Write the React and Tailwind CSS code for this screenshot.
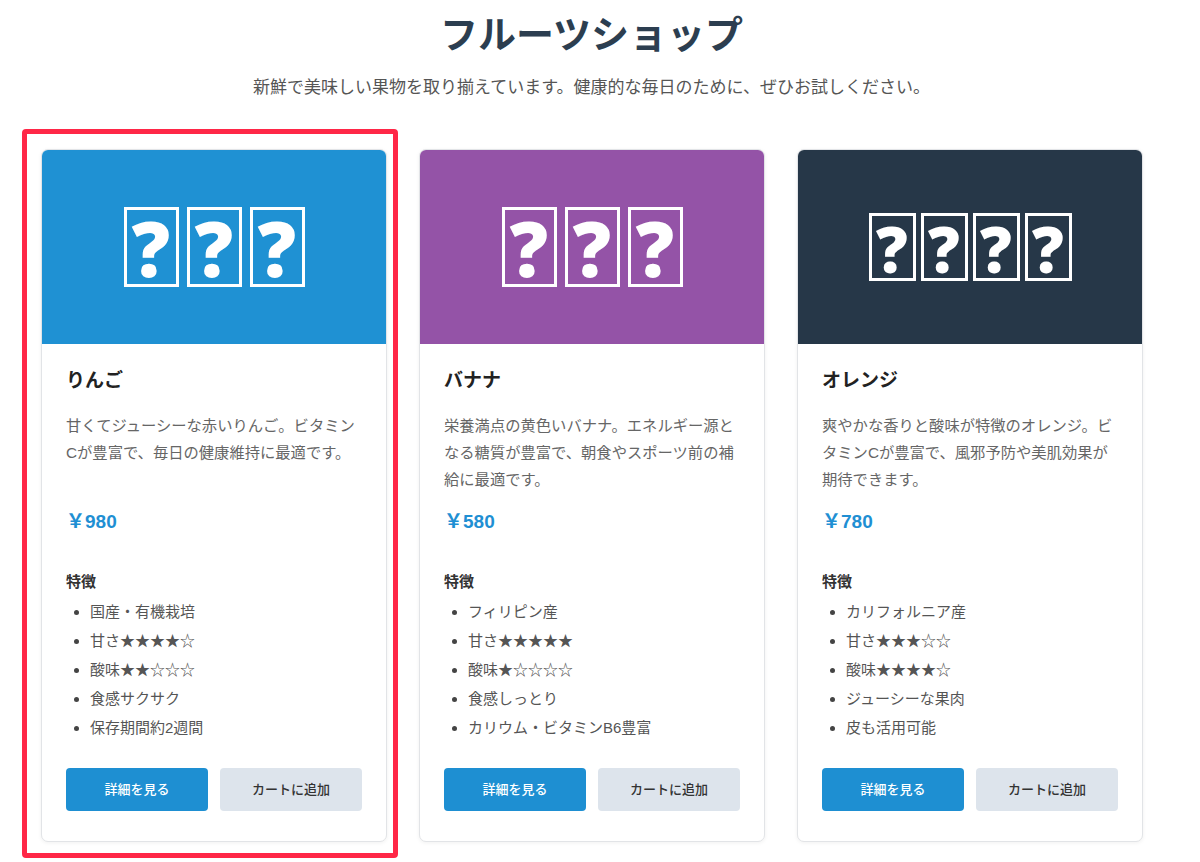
import React from "react";

const products = [
  {
    name: "りんご",
    color: "bg-[#1f91d3]",
    boxes: 3,
    big: true,
    desc: "甘くてジューシーな赤いりんご。ビタミンCが豊富で、毎日の健康維持に最適です。",
    price: "￥980",
    features: ["国産・有機栽培", "甘さ★★★★☆", "酸味★★☆☆☆", "食感サクサク", "保存期間約2週間"],
  },
  {
    name: "バナナ",
    color: "bg-[#9453a7]",
    boxes: 3,
    big: true,
    desc: "栄養満点の黄色いバナナ。エネルギー源となる糖質が豊富で、朝食やスポーツ前の補給に最適です。",
    price: "￥580",
    features: ["フィリピン産", "甘さ★★★★★", "酸味★☆☆☆☆", "食感しっとり", "カリウム・ビタミンB6豊富"],
  },
  {
    name: "オレンジ",
    color: "bg-[#263748]",
    boxes: 4,
    big: false,
    desc: "爽やかな香りと酸味が特徴のオレンジ。ビタミンCが豊富で、風邪予防や美肌効果が期待できます。",
    price: "￥780",
    features: ["カリフォルニア産", "甘さ★★★☆☆", "酸味★★★★☆", "ジューシーな果肉", "皮も活用可能"],
  },
];

const font = { fontFamily: '"Liberation Sans", "Noto Sans CJK JP", sans-serif' };

function Tofu({ big }) {
  return (
    <div
      className={
        big
          ? "w-[55px] h-[80px] border-[3px] border-white flex items-center justify-center overflow-visible"
          : "w-[47px] h-[68px] border-[3px] border-white flex items-center justify-center overflow-visible"
      }
    >
      <span
        className={
          big
            ? "text-white font-extrabold leading-none text-[76px] mt-[2px]"
            : "text-white font-extrabold leading-none text-[63px] mt-[2px]"
        }
        style={{ fontFamily: '"Open Sans", sans-serif' }}
      >
        ?
      </span>
    </div>
  );
}

function Card({ p }) {
  return (
    <div className="w-[346px] bg-white border border-[#e2e4e7] rounded-[7px] shadow-[0_1px_4px_rgba(0,0,0,0.06)] overflow-hidden flex flex-col">
      <div className={`h-[194px] ${p.color} flex items-center justify-center ${p.big ? "gap-[8px]" : "gap-[5px]"}`}>
        {Array.from({ length: p.boxes }).map((_, i) => (
          <Tofu key={i} big={p.big} />
        ))}
      </div>
      <div className="px-6 pt-6 pb-[30px] flex flex-col">
        <h2 className="text-[19px] font-bold leading-[26px] text-[#222] mb-[18px]">{p.name}</h2>
        <p className="text-[15.3px] leading-[27px] text-[#666] min-h-[81px] mb-4">{p.desc}</p>
        <div className="text-[19px] font-bold leading-[26px] text-[#1f8fd3] mb-9">{p.price}</div>
        <div className="text-[15px] font-bold leading-[22px] text-[#333]">特徴</div>
        <ul className="list-disc pl-6 mt-1 text-[15px] leading-[29px] text-[#555] marker:text-[#444]">
          {p.features.map((f) => (
            <li key={f}>{f}</li>
          ))}
        </ul>
        <div className="flex gap-3 mt-[26px]">
          <button className="flex-1 h-[43px] rounded-[4px] bg-[#1e8fd2] text-white text-[13px] font-medium">
            詳細を見る
          </button>
          <button className="flex-1 h-[43px] rounded-[4px] bg-[#dde4ec] text-[#333] text-[13px] font-medium">
            カートに追加
          </button>
        </div>
      </div>
    </div>
  );
}

export default function App() {
  return (
    <div className="relative w-[1200px] min-h-[862px] bg-white" style={font}>
      <div className="w-[1183px] pt-[12px] flex flex-col items-center">
        <h1 className="text-[38px] font-bold leading-[46px] text-[#2c3e50]">フルーツショップ</h1>
        <p className="mt-[18px] text-[17px] leading-[24px] text-[#555]">
          新鮮で美味しい果物を取り揃えています。健康的な毎日のために、ぜひお試しください。
        </p>
      </div>
      <div className="flex gap-[32px] pl-[41px] mt-[49px]">
        {products.map((p) => (
          <Card key={p.name} p={p} />
        ))}
      </div>
      <div className="absolute left-[22px] top-[129px] w-[376px] h-[729px] border-[5px] border-[#ff2747] rounded-[4px] pointer-events-none" />
    </div>
  );
}
